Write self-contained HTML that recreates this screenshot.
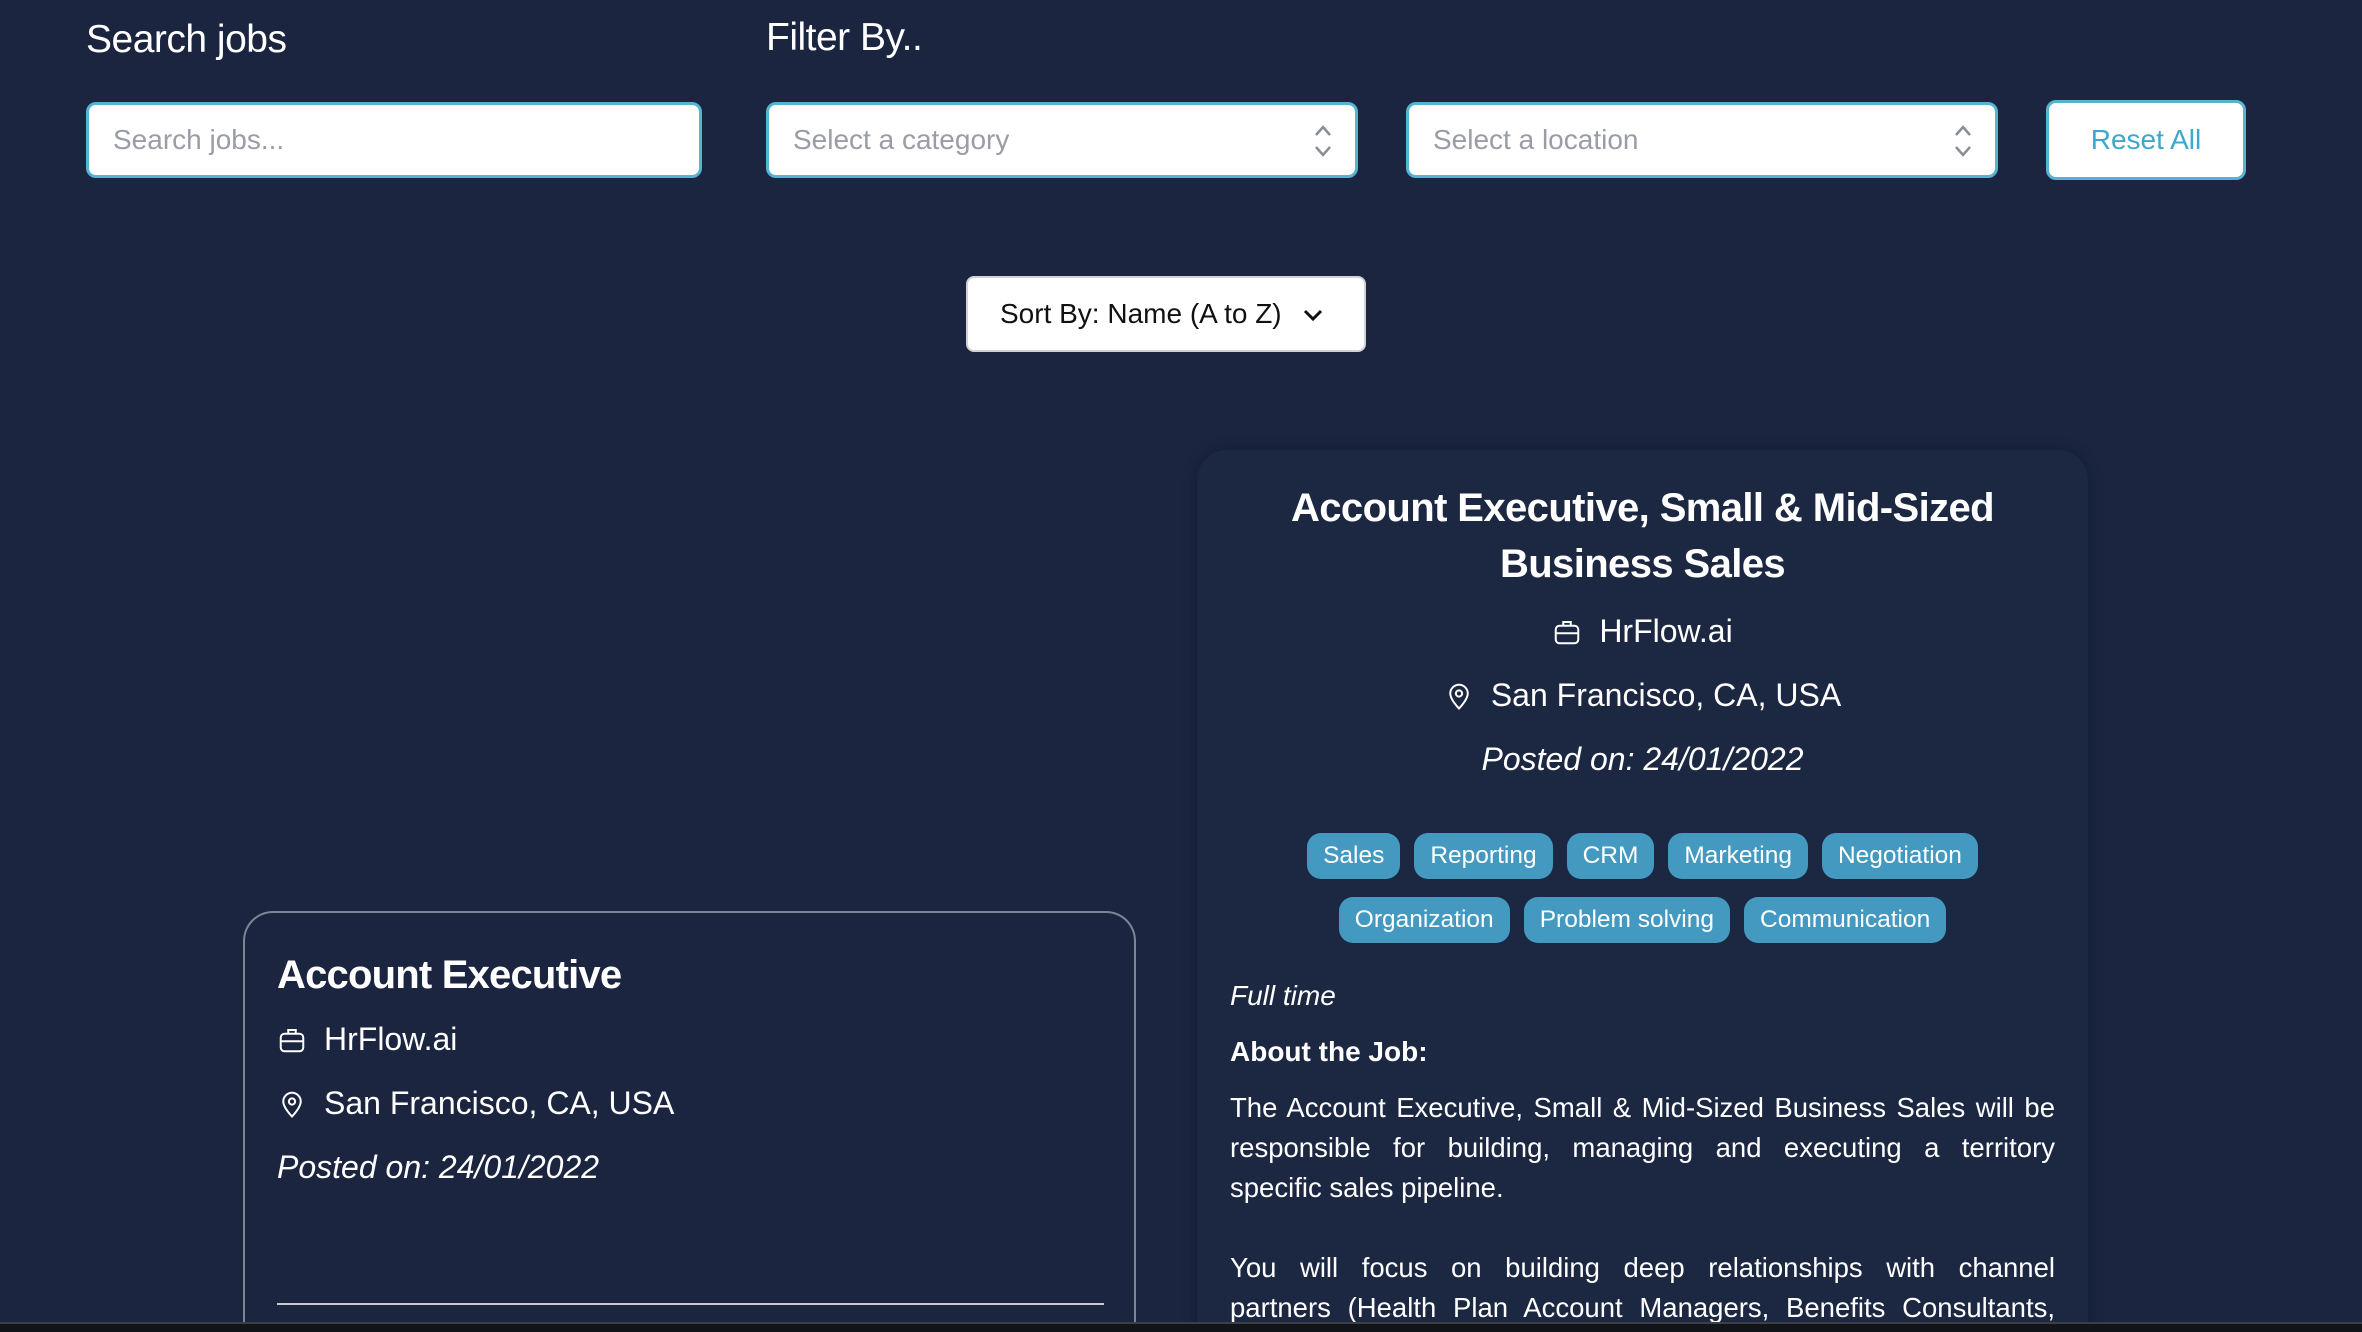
<!DOCTYPE html>
<html><head><meta charset="utf-8"><style>
*{box-sizing:border-box;margin:0;padding:0}
html,body{width:2362px;height:1332px;overflow:hidden;background:#1b2540;font-family:"Liberation Sans",sans-serif;color:#fff;position:relative}
.abs{position:absolute}
.lbl{font-size:39px;font-weight:300;letter-spacing:-0.5px}
.inp{background:#fff;border:3px solid #56b4d3;border-radius:10px;height:76px;top:102px;font-size:28px;color:#9a9ca6;padding-left:24px;line-height:70px}
.arr{position:absolute;right:22px;top:18px}
.card1{left:243px;top:911px;width:893px;height:421px;border:2px solid #7d8494;border-bottom:none;border-radius:30px 30px 0 0}
.card2{left:1197px;top:450px;width:891px;height:882px;border-radius:30px 30px 0 0;background:#1c2742;box-shadow:0 0 14px rgba(0,0,0,.25)}
.tag{display:inline-block;background:#4499c1;border-radius:14px;height:46px;line-height:46px;padding:0 16px;font-size:24.5px;margin:0 7px}
.row{font-size:32px;display:flex;align-items:center}
.j{display:block;text-align:justify;text-align-last:justify;height:40px}
</style></head><body>
<div class="abs lbl" style="left:86px;top:18px">Search jobs</div>
<div class="abs lbl" style="left:766px;top:16px">Filter By..</div>
<div class="abs inp" style="left:86px;width:616px">Search jobs...</div>
<div class="abs inp" style="left:766px;width:592px">Select a category<svg class="arr" width="20" height="36" viewBox="0 0 20 36"><path d="M3 12 L10 4 L17 12 M3 24 L10 32 L17 24" stroke="#8a8c96" stroke-width="2.5" fill="none"/></svg></div>
<div class="abs inp" style="left:1406px;width:592px">Select a location<svg class="arr" width="20" height="36" viewBox="0 0 20 36"><path d="M3 12 L10 4 L17 12 M3 24 L10 32 L17 24" stroke="#8a8c96" stroke-width="2.5" fill="none"/></svg></div>
<div class="abs" style="left:2046px;top:100px;width:200px;height:80px;background:#fff;border:3px solid #56b4d3;border-radius:10px;color:#3ea7cc;font-size:28px;text-align:center;line-height:74px">Reset All</div>
<div class="abs" style="left:966px;top:276px;width:400px;height:76px;background:#fff;border:2px solid #d0d2d6;border-radius:8px;color:#111;font-size:28px;line-height:72px;padding-left:32px">Sort By: Name (A to Z)<svg style="position:absolute;right:40px;top:30px" width="22" height="14" viewBox="0 0 22 14"><path d="M3 3 L11 11 L19 3" stroke="#111" stroke-width="3" fill="none"/></svg></div>

<div class="abs card1">
<div class="abs" style="left:32px;top:40px;font-size:40px;font-weight:bold;letter-spacing:-0.8px">Account Executive</div>
<div class="abs row" style="left:32px;top:108px"><svg width="30" height="30" viewBox="0 0 24 24" fill="none" stroke="#fff" stroke-width="1.6"><rect x="3" y="7" width="18" height="14" rx="3"/><path d="M9 7V4h6v3M3 13h18"/></svg><span style="margin-left:17px">HrFlow.ai</span></div>
<div class="abs row" style="left:32px;top:172px"><svg width="30" height="30" viewBox="0 0 24 24" fill="none" stroke="#fff" stroke-width="1.6"><path d="M12 22s7-7 7-12a7 7 0 0 0-14 0c0 5 7 12 7 12z"/><circle cx="12" cy="10" r="2.5"/></svg><span style="margin-left:17px">San Francisco, CA, USA</span></div>
<div class="abs" style="left:32px;top:236px;font-size:32px;font-style:italic">Posted on: 24/01/2022</div>
<div class="abs" style="left:32px;top:390px;width:827px;height:2px;background:#c8cad0"></div>
</div>

<div class="abs card2">
<div class="abs" style="left:0;top:30px;width:891px;text-align:center;font-size:40px;font-weight:bold;line-height:56px;letter-spacing:-0.6px">Account Executive, Small &amp; Mid-Sized<br>Business Sales</div>
<div class="abs row" style="left:0;width:891px;justify-content:center;top:163px"><svg width="30" height="30" viewBox="0 0 24 24" fill="none" stroke="#fff" stroke-width="1.6"><rect x="3" y="7" width="18" height="14" rx="3"/><path d="M9 7V4h6v3M3 13h18"/></svg><span style="margin-left:17px">HrFlow.ai</span></div>
<div class="abs row" style="left:0;width:891px;justify-content:center;top:227px"><svg width="30" height="30" viewBox="0 0 24 24" fill="none" stroke="#fff" stroke-width="1.6"><path d="M12 22s7-7 7-12a7 7 0 0 0-14 0c0 5 7 12 7 12z"/><circle cx="12" cy="10" r="2.5"/></svg><span style="margin-left:17px">San Francisco, CA, USA</span></div>
<div class="abs" style="left:0;width:891px;text-align:center;top:291px;font-size:32px;font-style:italic">Posted on: 24/01/2022</div>
<div class="abs" style="left:0;width:891px;text-align:center;top:383px"><span class="tag">Sales</span><span class="tag">Reporting</span><span class="tag">CRM</span><span class="tag">Marketing</span><span class="tag">Negotiation</span></div>
<div class="abs" style="left:0;width:891px;text-align:center;top:447px"><span class="tag">Organization</span><span class="tag">Problem solving</span><span class="tag">Communication</span></div>
<div class="abs" style="left:33px;top:530px;font-size:28px;font-style:italic">Full time</div>
<div class="abs" style="left:33px;top:586px;font-size:28px;font-weight:bold">About the Job:</div>
<div class="abs" style="left:33px;top:638px;width:825px;font-size:27.5px;line-height:40px">
<span class="j">The Account Executive, Small &amp; Mid-Sized Business Sales will be</span>
<span class="j">responsible for building, managing and executing a territory</span>
<span style="display:block;height:40px">specific sales pipeline.</span>
<span style="display:block;height:40px"></span>
<span class="j">You will focus on building deep relationships with channel</span>
<span class="j">partners (Health Plan Account Managers, Benefits Consultants,</span>
</div>
</div>
<div class="abs" style="left:0;top:1322px;width:2362px;height:10px;background:#111418;border-top:2px solid #3a3f48"></div>
</body></html>
